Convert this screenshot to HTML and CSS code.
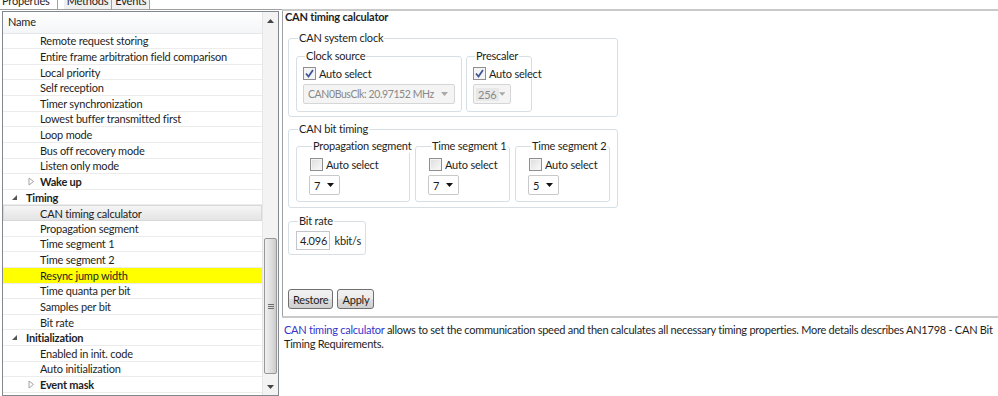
FILE: index.html
```html
<!DOCTYPE html>
<html lang="en">
<head>
    <meta charset="UTF-8">
    <title>CAN timing calculator</title>
    <link rel="stylesheet" href="styles.css">
</head>
<body>
    <div class="tabs">
        <span class="tab active">Properties</span>
        <span class="tab">Methods</span>
        <span class="tab">Events</span>
    </div>

    <div class="main">
        <!-- Property tree -->
        <div class="tree">
            <div class="tree-body">
                <div class="tree-head">Name</div>
                <div class="row child">Remote request storing</div>
                <div class="row child">Entire frame arbitration field comparison</div>
                <div class="row child">Local priority</div>
                <div class="row child">Self reception</div>
                <div class="row child">Timer synchronization</div>
                <div class="row child">Lowest buffer transmitted first</div>
                <div class="row child">Loop mode</div>
                <div class="row child">Bus off recovery mode</div>
                <div class="row child">Listen only mode</div>
                <div class="row child bold">
                    <svg class="tw closed" width="7" height="9" viewBox="0 0 7 9"><path d="M1 1 L5.5 4.5 L1 8 Z" fill="none" stroke="#a3a3a3"/></svg>Wake up
                </div>
                <div class="row group bold">
                    <svg class="tw open" width="7" height="7" viewBox="0 0 7 7"><path d="M6 1 L6 6 L1 6 Z" fill="#555"/></svg>Timing
                </div>
                <div class="row child selected">CAN timing calculator</div>
                <div class="row child">Propagation segment</div>
                <div class="row child">Time segment 1</div>
                <div class="row child">Time segment 2</div>
                <div class="row child marked">Resync jump width</div>
                <div class="row child">Time quanta per bit</div>
                <div class="row child">Samples per bit</div>
                <div class="row child">Bit rate</div>
                <div class="row group bold">
                    <svg class="tw open" width="7" height="7" viewBox="0 0 7 7"><path d="M6 1 L6 6 L1 6 Z" fill="#555"/></svg>Initialization
                </div>
                <div class="row child">Enabled in init. code</div>
                <div class="row child">Auto initialization</div>
                <div class="row child bold">
                    <svg class="tw closed" width="7" height="9" viewBox="0 0 7 9"><path d="M1 1 L5.5 4.5 L1 8 Z" fill="none" stroke="#a3a3a3"/></svg>Event mask
                </div>
            </div>
            <div class="scrollbar">
                <div class="sb-arrow">
                    <svg width="7" height="4" viewBox="0 0 7 4"><path d="M0 4 L3.5 0 L7 4 Z" fill="#444"/></svg>
                </div>
                <div class="sb-track">
                    <div class="sb-thumb">
                        <span class="grip"></span>
                    </div>
                </div>
                <div class="sb-arrow">
                    <svg width="7" height="4" viewBox="0 0 7 4"><path d="M0 0 L7 0 L3.5 4 Z" fill="#444"/></svg>
                </div>
            </div>
        </div>

        <!-- Editor panel -->
        <div class="panel">
            <div class="editor">
                <div class="title">CAN timing calculator</div>

                <fieldset class="box box-clock">
                    <legend>CAN system clock</legend>
                    <div class="box-row">
                        <fieldset class="box sub sub-source">
                            <legend>Clock source</legend>
                            <label class="check"><span class="cb checked"></span>Auto select</label>
                            <div class="combo disabled wide">
                                <span>CAN0BusClk: 20.97152 MHz</span>
                                <svg width="7" height="4" viewBox="0 0 7 4"><path d="M0 0 L7 0 L3.5 4 Z" fill="#a8a8a8"/></svg>
                            </div>
                        </fieldset>
                        <fieldset class="box sub sub-prescaler">
                            <legend>Prescaler</legend>
                            <label class="check"><span class="cb checked"></span>Auto select</label>
                            <div class="combo disabled small">
                                <span class="val-grey">256</span>
                                <svg width="7" height="4" viewBox="0 0 7 4"><path d="M0 0 L7 0 L3.5 4 Z" fill="#a8a8a8"/></svg>
                            </div>
                        </fieldset>
                    </div>
                </fieldset>

                <fieldset class="box box-bit">
                    <legend>CAN bit timing</legend>
                    <div class="box-row">
                        <fieldset class="box sub seg seg-prop">
                            <legend>Propagation segment</legend>
                            <label class="check"><span class="cb"></span>Auto select</label>
                            <div class="combo small">
                                <span>7</span>
                                <svg width="7" height="4" viewBox="0 0 7 4"><path d="M0 0 L7 0 L3.5 4 Z" fill="#111"/></svg>
                            </div>
                        </fieldset>
                        <fieldset class="box sub seg">
                            <legend>Time segment 1</legend>
                            <label class="check"><span class="cb"></span>Auto select</label>
                            <div class="combo small">
                                <span>7</span>
                                <svg width="7" height="4" viewBox="0 0 7 4"><path d="M0 0 L7 0 L3.5 4 Z" fill="#111"/></svg>
                            </div>
                        </fieldset>
                        <fieldset class="box sub seg">
                            <legend>Time segment 2</legend>
                            <label class="check"><span class="cb"></span>Auto select</label>
                            <div class="combo small">
                                <span>5</span>
                                <svg width="7" height="4" viewBox="0 0 7 4"><path d="M0 0 L7 0 L3.5 4 Z" fill="#111"/></svg>
                            </div>
                        </fieldset>
                    </div>
                </fieldset>

                <fieldset class="box box-rate">
                    <legend>Bit rate</legend>
                    <div class="rate-row">
                        <span class="field">4.096</span>
                        <span>kbit/s</span>
                    </div>
                </fieldset>

                <div class="buttons">
                    <button class="btn">Restore</button>
                    <button class="btn">Apply</button>
                </div>
            </div>

            <div class="description">
                <span class="link">CAN timing calculator</span> allows to set the communication speed and then calculates all necessary timing properties. More details describes AN1798 - CAN Bit Timing Requirements.
            </div>
        </div>
    </div>
</body>
</html>
```

FILE: styles.css
```css
* {
    box-sizing: border-box;
}
body {
    margin: 0;
    height: 396px;
    overflow: hidden;
    font-family: Lato, "Noto Sans", sans-serif;
    font-size: 11px;
    letter-spacing: -0.2px;
    color: #1e1e1e;
    background-color: #fff;
}
.bold {
    font-weight: bold;
}

/* tab strip, mostly scrolled out of view */
.tabs {
    display: flex;
    height: 18px;
    margin-top: -8px;
    border-bottom: 1px solid #a0a0a0;
    white-space: nowrap;
}
.tab {
    padding: 0 3px;
    line-height: 16px;
    border: 1px solid #a0a0a0;
    border-bottom: none;
    background-color: #f0f0f0;
}
.tab.active {
    background-color: #fff;
    border-left: none;
    margin-right: 6px;
    padding: 0 7px 0 2px;
    border-radius: 0 8px 0 0;
}
.tab + .tab {
    border-left: none;
}

.main {
    display: flex;
    height: 386px;
}

/* tree */
.tree {
    display: flex;
    width: 277px;
    margin-left: 2px;
    margin-top: 1px;
    border: 1px solid #828790;
    height: 385px;
}
.tree-body {
    flex: 1;
    overflow: hidden;
}
.tree-head {
    height: 21.5px;
    line-height: 20px;
    padding-left: 5px;
    background: linear-gradient(#fff, #f4f5f7);
    border-bottom: 1px solid #e4e6ea;
}
.row {
    display: flex;
    align-items: center;
    height: 15.64px;
    border-bottom: 1px solid #ececec;
    white-space: nowrap;
}
.row.child {
    padding-left: 37px;
}
.row.group {
    padding-left: 8px;
}
.tw {
    flex: none;
}
.tw.closed {
    margin-left: -12px;
    margin-right: 5px;
}
.tw.open {
    margin-right: 8px;
}
.row.selected {
    background: linear-gradient(#f5f5f5, #e4e4e4);
    border: 1px solid #d8d8d8;
    padding-left: 36px;
}
.row.marked {
    background-color: #ffff00;
}

/* scrollbar */
.scrollbar {
    width: 16px;
    display: flex;
    flex-direction: column;
    background-color: #f3f3f3;
    border-left: 1px solid #e6e6e6;
}
.sb-arrow {
    height: 17px;
    display: flex;
    align-items: center;
    justify-content: center;
}
.sb-track {
    flex: 1;
    padding-top: 209px;
    padding-left: 1px;
}
.sb-thumb {
    height: 136px;
    width: 13px;
    border: 1px solid #979797;
    border-radius: 2px;
    background: linear-gradient(90deg, #f0f0f0, #dcdcdc 60%, #cbcbcb);
    display: flex;
    align-items: center;
    justify-content: center;
}
.grip {
    width: 6px;
    height: 5px;
    border-top: 1px solid #6c6c6c;
    border-bottom: 1px solid #6c6c6c;
    background: linear-gradient(transparent 1px, #6c6c6c 1px, #6c6c6c 2px, transparent 2px);
}

/* right panel */
.panel {
    flex: 1;
    margin-left: 3px;
    margin-top: -1px;
    border-top: 2px solid #c9c9c9;
    display: flex;
    flex-direction: column;
    white-space: nowrap;
}
.editor {
    border-left: 1px solid #a0a0a0;
    padding-left: 5px;
    height: 305px;
}
.title {
    font-weight: bold;
    line-height: 14px;
    margin-top: -1px;
    margin-left: -3px;
}

fieldset.box {
    margin: 0;
    min-width: 0;
    border: 1px solid #d5dfe5;
    border-radius: 3px;
}
fieldset.box legend {
    padding: 0 1px;
    line-height: 14px;
    margin-left: 2px;
}
.box-clock {
    width: 330px;
    margin-top: 7px !important;
    padding: 4px 7px 4px 7px;
}
.box-bit {
    width: 330px;
    margin-top: 5px !important;
    padding: 3px 7px 5px 7px;
}
.box-row {
    display: flex;
    gap: 4px;
}
.box-bit .box-row {
    gap: 5px;
}
fieldset.sub {
    padding: 3px 6px 7px 6px;
}
.sub-source {
    width: 166px;
}
.sub-prescaler {
    width: 66px;
}
.seg {
    width: 95px;
    padding: 4px 6px 6px 13px !important;
}
.seg-prop {
    width: 114px;
}

.check {
    display: flex;
    align-items: center;
    height: 14px;
}
.cb {
    flex: none;
    width: 13px;
    height: 13px;
    margin-right: 3px;
    border: 1px solid #8f8f8f;
    background: linear-gradient(135deg, #dcdcdc, #fafafa);
    box-shadow: inset 0 0 0 1px #f4f4f4;
}
.cb.checked {
    background: #f4f4f4 url("data:image/svg+xml;utf8,<svg xmlns='http://www.w3.org/2000/svg' width='11' height='11'><path d='M2 5.5 L4.5 8.5 L9 2' fill='none' stroke='%23405596' stroke-width='1.8'/></svg>") center no-repeat;
}

.combo {
    display: flex;
    align-items: center;
    justify-content: space-between;
    height: 20px;
    margin-top: 4px;
    padding: 0 5px 0 4px;
    border: 1px solid #c9c9c9;
    border-radius: 2px;
    background-color: #fff;
}
.combo.disabled {
    background-color: #f4f4f4;
    color: #888;
    border-color: #d6d6d6;
}
.combo.wide {
    width: 152px;
    font-size: 10.5px;
    letter-spacing: -0.4px;
    padding-right: 6px;
}
.combo.small {
    width: 31px;
}
.sub-prescaler .combo.small {
    width: 38px;
}
.val-grey {
    background-color: #e8e8e8;
    padding: 0 2px;
    margin-left: -2px;
}
.seg .combo {
    margin-left: -1px;
}

.box-rate {
    width: 78px;
    margin-top: 6px !important;
    padding: 3px 4px 4px 7px;
}
.rate-row {
    display: flex;
    align-items: center;
    gap: 5px;
}
.field {
    width: 34px;
    height: 19px;
    line-height: 17px;
    padding-left: 3px;
    border: 1px solid #c3c7cc;
}

.buttons {
    display: flex;
    gap: 4px;
    margin-top: 34px;
}
.btn {
    font-family: inherit;
    font-size: 11px;
    letter-spacing: -0.2px;
    color: #1e1e1e;
    height: 20px;
    padding: 0 4px;
    border: 1px solid #707070;
    border-radius: 3px;
    background: linear-gradient(#f2f2f2, #ebebeb 50%, #dddddd 50%, #cfcfcf);
}

.description {
    border-top: 2px solid #c9c9c9;
    padding: 5px 0 0 2px;
    line-height: 14px;
    letter-spacing: -0.25px;
    white-space: normal;
}
.link {
    color: #3434cc;
}
```
